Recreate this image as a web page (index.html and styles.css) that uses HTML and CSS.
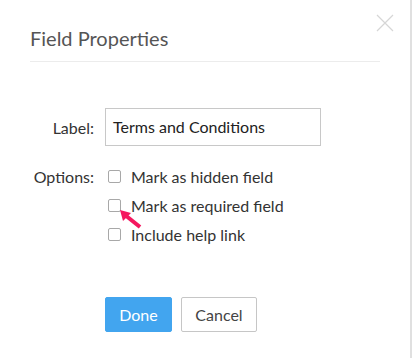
FILE: index.html
```html
<!DOCTYPE html>
<html>
<head>
<meta charset="utf-8">
<link rel="stylesheet" href="styles.css">
</head>
<body>
<div class="dialog">
  <div class="header">
    <h1 class="title">Field Properties</h1>
    <button class="close" aria-label="Close">
      <svg width="18" height="18" viewBox="0 0 18 18"><path d="M1 1 L17 17 M17 1 L1 17" stroke="#d6d6d6" stroke-width="1.2" fill="none"/></svg>
    </button>
  </div>
  <div class="form">
    <div class="row label-row">
      <span class="field-label">Label:</span>
      <div class="input">Terms and Conditions</div>
    </div>
    <div class="row options-row">
      <span class="field-label opt-label">Options:</span>
      <div class="options">
        <label class="option"><span class="box"></span>Mark as hidden field</label>
        <label class="option"><span class="box"></span>Mark as required field</label>
        <label class="option"><span class="box"></span>Include help link</label>
      </div>
    </div>
    <div class="actions">
      <button class="btn primary">Done</button>
      <button class="btn secondary">Cancel</button>
    </div>
  </div>
  <svg class="pointer" width="28" height="24" viewBox="0 0 28 24">
    <path d="M2 2 L13 5 L5 13 Z" fill="#f5175f"/>
    <path d="M7 7 L22 19" stroke="#f5175f" stroke-width="4" stroke-linecap="butt"/>
  </svg>
</div>
</body>
</html>
```
FILE: styles.css
```css
html, body {
  margin: 0;
  padding: 0;
  background: #fff;
}
body {
  font-family: Lato, "Open Sans", Arial, sans-serif;
  color: #333;
  width: 412px;
  height: 358px;
  overflow: hidden;
}
.dialog {
  position: relative;
  box-sizing: border-box;
  width: 412px;
  height: 358px;
  padding: 0 30px 0 30px;
  border-right: 2px solid #e0e0e0;
}
.header {
  padding-top: 26px;
  padding-bottom: 11px;
  border-bottom: 1px solid #ececec;
}
.title {
  margin: 0;
  font-size: 20px;
  line-height: 24px;
  font-weight: 400;
  color: #555;
}
.close {
  position: absolute;
  top: 14px;
  right: 16px;
  padding: 0;
  border: 0;
  background: none;
  width: 18px;
  height: 18px;
}
.close svg { display: block; }
.form {
  padding-top: 46px;
}
.row {
  display: flex;
  column-gap: 11px;
}
.field-label {
  width: 64px;
  text-align: right;
  font-size: 16px;
  color: #333;
}
.label-row {
  align-items: center;
}
.input {
  box-sizing: border-box;
  width: 216px;
  height: 38px;
  border: 1px solid #c8c8c8;
  padding: 0 7px;
  font-size: 16px;
  line-height: 36px;
  color: #222;
}
.options-row {
  margin-top: 16px;
}
.opt-label {
  line-height: 29px;
}
.options {
  display: flex;
  flex-direction: column;
}
.option {
  display: flex;
  align-items: center;
  height: 29px;
  font-size: 16px;
  color: #333;
}
.box {
  box-sizing: border-box;
  width: 13px;
  height: 13px;
  margin-left: 3px;
  margin-right: 10px;
  border: 1px solid #a8a8a8;
  border-radius: 2px;
  background: #fff;
}
.actions {
  display: flex;
  gap: 9px;
  margin-top: 48px;
  padding-left: 75px;
}
.btn {
  box-sizing: border-box;
  height: 35px;
  font-family: inherit;
  font-size: 16px;
  border-radius: 2px;
  padding: 0;
}
.primary {
  width: 67px;
  background: #42a5ef;
  border: 1px solid #42a5ef;
  color: #fff;
}
.secondary {
  width: 76px;
  background: #fff;
  border: 1px solid #c6c6c6;
  color: #444;
}
.pointer {
  position: absolute;
  left: 118px;
  top: 208px;
}
```
